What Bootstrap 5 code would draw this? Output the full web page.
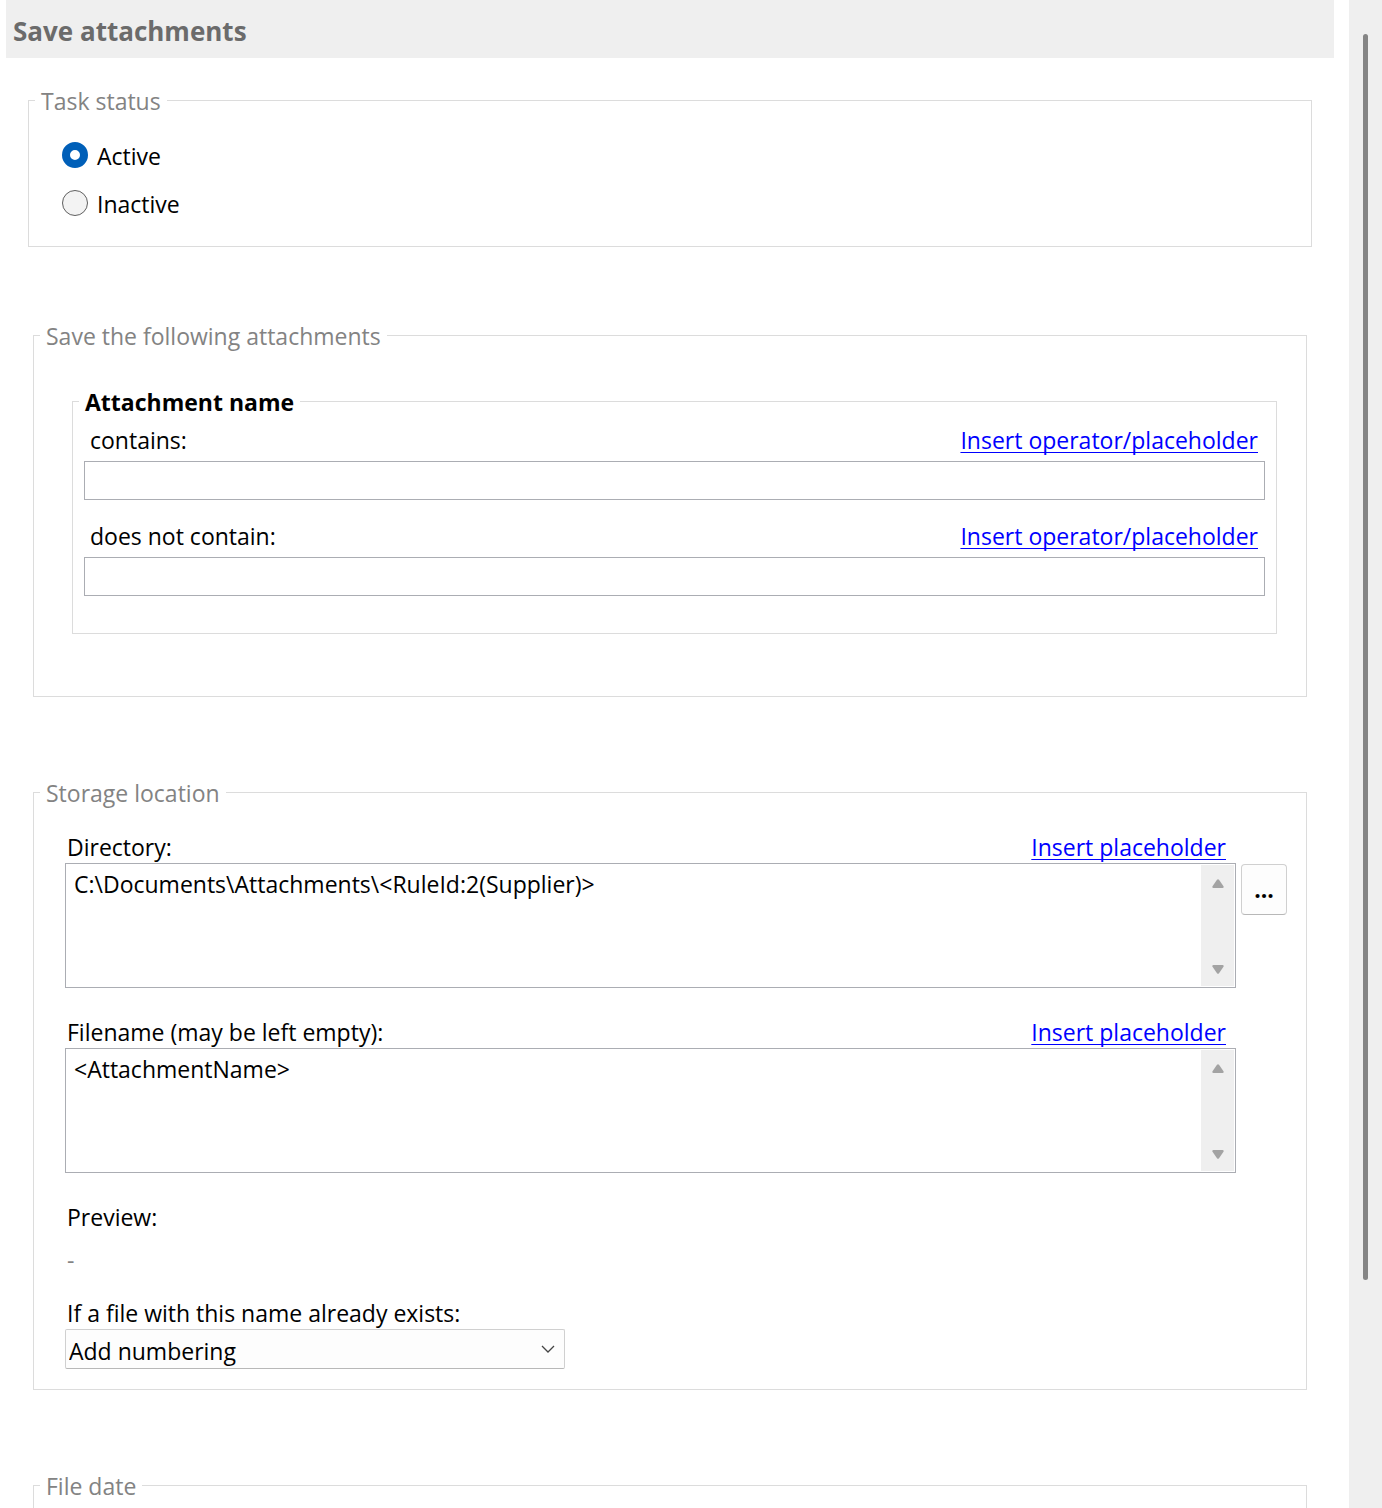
<!DOCTYPE html>
<html lang="en">
<head>
<meta charset="utf-8">
<meta name="viewport" content="width=device-width, initial-scale=1">
<title>Save attachments</title>
<link href="https://cdn.jsdelivr.net/npm/bootstrap@5.3.0/dist/css/bootstrap.min.css" rel="stylesheet">
<style>
  body { font-family: "Open Sans", "Noto Sans", sans-serif; font-size: 23px; line-height: 31px; color: #000; background: #fff; }
  .pane { min-width: 0; padding: 0 15px 0 6px; }
  .title-bar { background: #efefef; padding: 16px 7px 11px; }
  .title-bar h1 { font-size: 26px; line-height: 31px; font-weight: 700; color: #6b6b6b; }
  /* Group boxes keep the native border with the caption set into it */
  .group-box { border: 1px solid #dcdcdc; min-width: 0; }
  .group-box > legend { float: none; width: auto; margin: 0 0 0 6px; padding: 2px 6px 0; font-size: 23px; line-height: 31px; color: #838383; }
  .group-box > .caption-strong { font-weight: 700; color: #000; }
  .box-status { margin: 26px 22px 72px; }
  .box-filter, .box-storage, .box-date { margin: 0 27px 79px; }
  .body-status { padding: 14px 33px 19px; }
  .body-filter { padding: 33px 29px 62px 38px; }
  .body-name { padding: 7px 11px 37px; }
  .body-storage { padding: 23px 19px 20px 31px; }
  .body-date { padding: 23px 31px 120px; }
  .choice { height: 48px; gap: 9px; }
  .choice label { padding-top: 2px; }
  .choice .form-check-input { width: 26px; height: 26px; border: 1px solid #5f5f5f; background-color: #f3f3f3; }
  .choice .form-check-input:checked { border: 8px solid #005fb8; background: #fff; }
  .field-head { padding: 0 7px 5px 6px; }
  .field-head + .form-control { height: 39px; }
  .field-gap { margin-bottom: 21px; }
  .area-head { padding: 0 10px 0 2px; }
  .form-control, .area-frame { border: 1px solid #abadb3; border-radius: 0; }
  .area-frame { height: 125px; padding: 1px; }
  .area-frame textarea { resize: none; border: 0; padding: 4px 7px; font-size: 23px; line-height: 31px; color: #000; overflow: hidden; }
  .area-scroll { width: 33px; background: #efefef; padding: 14px 0 12px; }
  .area-wrap { margin-right: 51px; }
  .ins { color: #00f; text-decoration: underline; text-decoration-thickness: 1px; text-underline-offset: 3px; text-decoration-skip-ink: none; }
  .browse { width: 46px; height: 51px; margin: 1px 0 0 5px; padding: 0; border: 1px solid #d0d0d0; border-bottom-color: #b8b8b8; border-radius: 4px; background: #fdfdfd; color: #000; font-size: 23px; line-height: 31px; font-weight: 700; }
  .policy { width: 500px; max-width: 100%; height: 40px; padding: 5px 36px 1px 3px; border: 1px solid #d0d0d0; border-bottom-color: #b8b8b8; border-radius: 2px; background-color: #fdfdfd; color: #000; font-size: 23px; line-height: 31px; background-position: right 8px center; background-size: 16px 16px;
    background-image: url("data:image/svg+xml,%3Csvg xmlns='http://www.w3.org/2000/svg' viewBox='0 0 16 16'%3E%3Cpath d='M2 5l6 6 6-6' fill='none' stroke='%23444' stroke-width='1.3'/%3E%3C/svg%3E"); }
  .stack-gap { margin-bottom: 29px; }
  .preview-value { padding: 12px 2px 22px; color: #838383; }
  .page-scroll { width: 33px; background: #efefef; padding: 34px 0 0 14px; }
  .page-thumb { width: 5px; height: 84.5%; border-radius: 3px; background: #858585; }
</style>
<script src="https://cdn.jsdelivr.net/npm/bootstrap@5.3.0/dist/js/bootstrap.bundle.min.js"></script>
</head>
<body>
<div class="d-flex vh-100 overflow-hidden">
  <main class="pane flex-grow-1 overflow-hidden">
    <header class="title-bar"><h1 class="m-0">Save attachments</h1></header>

    <fieldset class="group-box box-status">
      <legend>Task status</legend>
      <div class="body-status">
        <div class="choice d-flex align-items-center">
          <input class="form-check-input m-0" type="radio" name="status" id="active" checked>
          <label for="active">Active</label>
        </div>
        <div class="choice d-flex align-items-center">
          <input class="form-check-input m-0" type="radio" name="status" id="inactive">
          <label for="inactive">Inactive</label>
        </div>
      </div>
    </fieldset>

    <fieldset class="group-box box-filter">
      <legend>Save the following attachments</legend>
      <div class="body-filter">
        <fieldset class="group-box">
          <legend class="caption-strong">Attachment name</legend>
          <div class="body-name">
            <div class="field-gap">
              <div class="field-head d-flex justify-content-between">
                <label for="contains">contains:</label>
                <a class="ins" href="#">Insert operator/placeholder</a>
              </div>
              <input class="form-control" type="text" id="contains">
            </div>
            <div>
              <div class="field-head d-flex justify-content-between">
                <label for="excludes">does not contain:</label>
                <a class="ins" href="#">Insert operator/placeholder</a>
              </div>
              <input class="form-control" type="text" id="excludes">
            </div>
          </div>
        </fieldset>
      </div>
    </fieldset>

    <fieldset class="group-box box-storage">
      <legend>Storage location</legend>
      <div class="body-storage">
        <div class="area-wrap area-head d-flex justify-content-between">
          <label for="directory">Directory:</label>
          <a class="ins" href="#">Insert placeholder</a>
        </div>
        <div class="stack-gap d-flex align-items-start">
          <div class="area-frame d-flex flex-grow-1">
            <textarea class="flex-grow-1" id="directory">C:\Documents\Attachments\&lt;RuleId:2(Supplier)&gt;</textarea>
            <div class="area-scroll d-flex flex-column justify-content-between align-items-center" aria-hidden="true">
              <svg width="12" height="9" viewBox="0 0 12 9"><path d="M5 .8Q6-.4 7 .8L11.500 7.200Q12.200 9 10.500 9H1.500Q-.2 9 .5 7.200z" fill="#a3a3a3"/></svg>
              <svg width="12" height="9" viewBox="0 0 12 9"><path d="M5 8.200Q6 9.400 7 8.200L11.500 1.800Q12.200 0 10.500 0H1.500Q-.2 0 .5 1.800z" fill="#a3a3a3"/></svg>
            </div>
          </div>
          <button class="browse" type="button" aria-label="Browse">...</button>
        </div>

        <div class="area-wrap area-head d-flex justify-content-between">
          <label for="filename">Filename (may be left empty):</label>
          <a class="ins" href="#">Insert placeholder</a>
        </div>
        <div class="area-wrap area-frame stack-gap d-flex">
          <textarea class="flex-grow-1" id="filename">&lt;AttachmentName&gt;</textarea>
          <div class="area-scroll d-flex flex-column justify-content-between align-items-center" aria-hidden="true">
            <svg width="12" height="9" viewBox="0 0 12 9"><path d="M5 .8Q6-.4 7 .8L11.500 7.200Q12.200 9 10.500 9H1.500Q-.2 9 .5 7.200z" fill="#a3a3a3"/></svg>
            <svg width="12" height="9" viewBox="0 0 12 9"><path d="M5 8.200Q6 9.400 7 8.200L11.500 1.800Q12.200 0 10.500 0H1.500Q-.2 0 .5 1.800z" fill="#a3a3a3"/></svg>
          </div>
        </div>

        <div class="area-head">Preview:</div>
        <div class="preview-value">-</div>
        <div class="area-head"><label for="policy">If a file with this name already exists:</label></div>
        <select class="form-select policy" id="policy">
          <option>Add numbering</option>
        </select>
      </div>
    </fieldset>

    <fieldset class="group-box box-date">
      <legend>File date</legend>
      <div class="body-date"></div>
    </fieldset>
  </main>
  <div class="page-scroll flex-shrink-0" aria-hidden="true"><div class="page-thumb"></div></div>
</div>
</body>
</html>
